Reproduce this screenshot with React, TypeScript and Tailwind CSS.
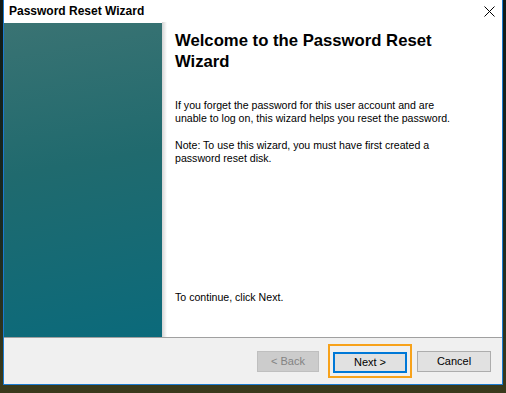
import React from 'react'

const font = { fontFamily: '"Liberation Sans", Arial, sans-serif' }

const WizardButton: React.FC<{ label: string; disabled?: boolean; primary?: boolean }> = ({ label, disabled, primary }) => {
  const btn = (
    <button
      type="button"
      disabled={disabled}
      className={
        disabled
          ? 'h-[21px] w-[62px] border border-[#bfbfbf] bg-[#cccccc] text-[11px] text-[#838383]'
          : primary
            ? 'h-[21px] w-[74px] border-2 border-[#0078d7] bg-[#e1e1e1] text-[11px] text-black'
            : 'h-[21px] w-[74px] border border-[#adadad] bg-[#e1e1e1] text-[11px] text-black'
      }
    >
      {label}
    </button>
  )
  if (!primary) return btn
  // focus highlight ring around the default button
  return <div className="border-2 border-[#f7a21b] p-[3px]">{btn}</div>
}

export default function App() {
  return (
    <div
      className="h-[393px] w-[506px] overflow-hidden bg-[linear-gradient(180deg,#101a18_0%,#1c2a20_60%,#3a3a1c_100%)] pl-[3px]"
      style={font}
    >
      <div className="flex w-[500px] flex-col border border-t-0 border-[#1b7bd0] bg-white">
        {/* title bar */}
        <div className="flex h-[22px] items-center justify-between bg-white pl-[5px] pr-[7px]">
          <span className="text-[12px] font-bold text-black">Password Reset Wizard</span>
          <svg width="11" height="11" viewBox="0 0 11 11" className="mt-[1px]">
            <path d="M0.5 0.5L10.5 10.5M10.5 0.5L0.5 10.5" stroke="#000" strokeWidth="1" />
          </svg>
        </div>

        {/* body */}
        <div className="flex h-[315px]">
          <div className="mt-[1px] w-[158px] bg-[linear-gradient(170deg,#3a7373_0%,#206a6e_45%,#0b6a7b_100%)]" />
          <div className="w-[5px] bg-[linear-gradient(90deg,#d4d4d4,#ffffff)]" />
          <div className="flex flex-1 flex-col pl-[8px] pt-[8px] text-black">
            <h1 className="text-[16.7px] font-bold leading-[21px]">
              Welcome to the Password Reset
              <br />
              Wizard
            </h1>
            <p className="mt-[27px] text-[10.6px] leading-[13px]">
              If you forget the password for this user account and are
              <br />
              unable to log on, this wizard helps you reset the password.
            </p>
            <p className="mt-[14px] text-[10.6px] leading-[13px]">
              Note: To use this wizard, you must have first created a
              <br />
              password reset disk.
            </p>
            <p className="mt-auto mb-[33px] text-[10.6px] leading-[13px]">To continue, click Next.</p>
          </div>
        </div>

        <div className="h-px bg-[#a0a0a0]" />

        {/* footer */}
        <div className="flex h-[46px] items-center justify-end gap-[5px] bg-[#f0f0f0] pr-[11px]">
          <WizardButton label="< Back" disabled />
          <div className="ml-[4px]">
            <WizardButton label="Next >" primary />
          </div>
          <WizardButton label="Cancel" />
        </div>
      </div>
    </div>
  )
}
